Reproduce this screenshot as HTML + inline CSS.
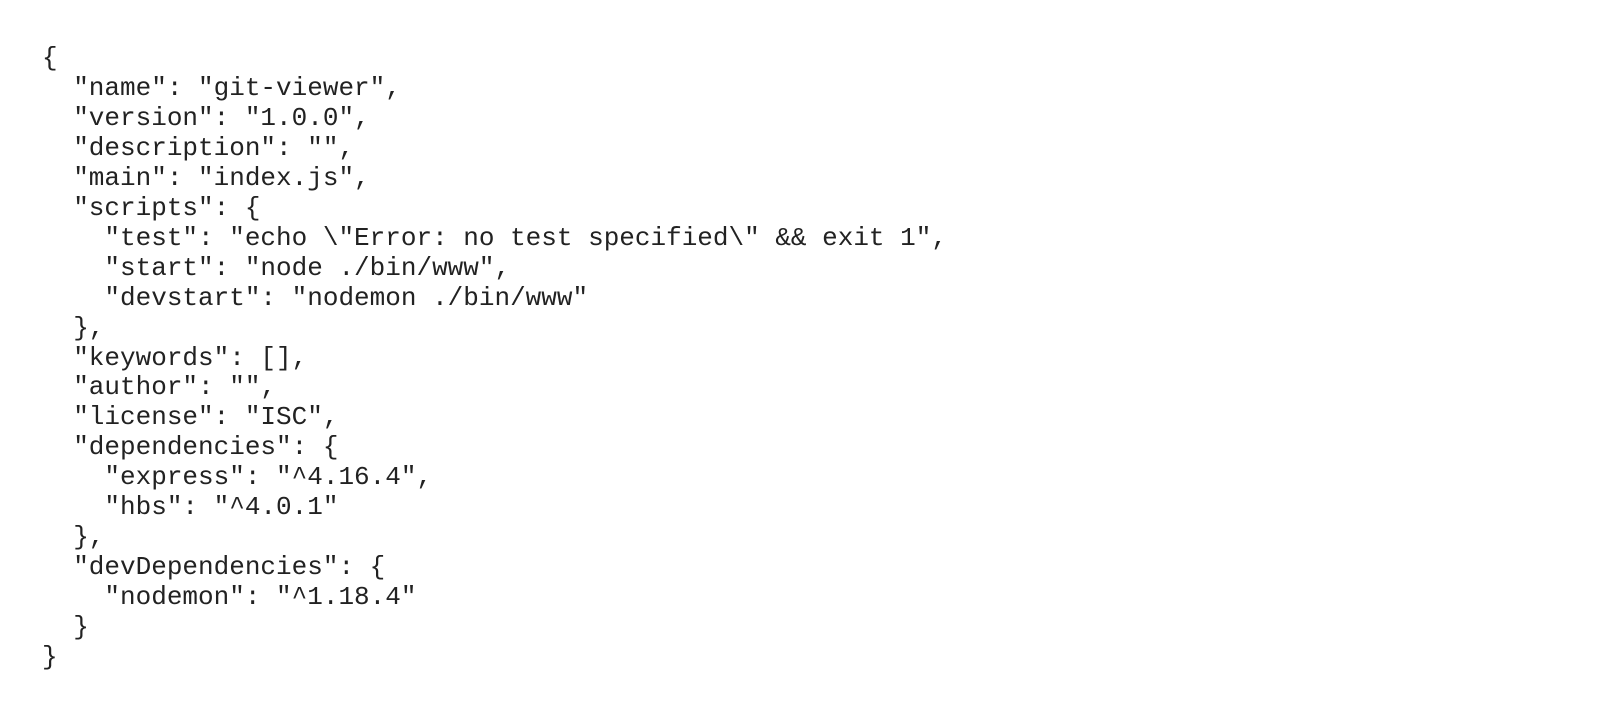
<!DOCTYPE html>
<html><head><meta charset="utf-8"><style>
html,body{margin:0;padding:0;background:#fff;width:1600px;height:710px;overflow:hidden}
pre{position:absolute;left:42px;top:44px;margin:0;font-family:"Liberation Mono",monospace;font-size:26px;line-height:29.96px;color:#222}
</style></head><body><pre>{
  "name": "git-viewer",
  "version": "1.0.0",
  "description": "",
  "main": "index.js",
  "scripts": {
    "test": "echo \"Error: no test specified\" &amp;&amp; exit 1",
    "start": "node ./bin/www",
    "devstart": "nodemon ./bin/www"
  },
  "keywords": [],
  "author": "",
  "license": "ISC",
  "dependencies": {
    "express": "^4.16.4",
    "hbs": "^4.0.1"
  },
  "devDependencies": {
    "nodemon": "^1.18.4"
  }
}</pre></body></html>
